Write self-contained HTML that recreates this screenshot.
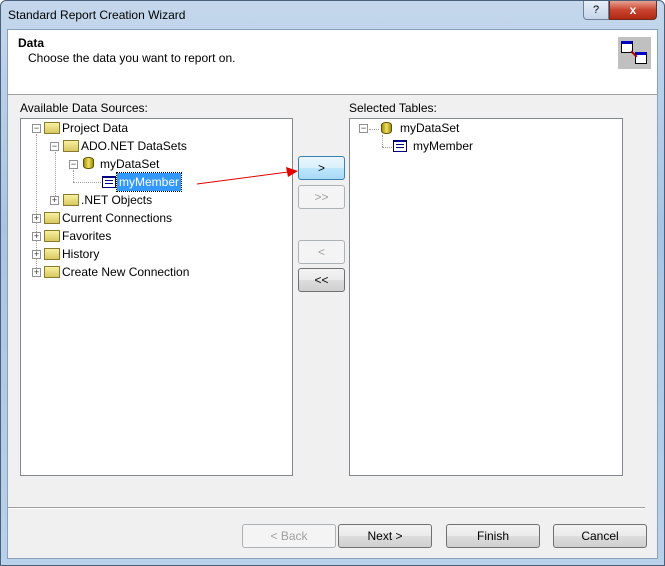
<!DOCTYPE html><html><head><style>
*{margin:0;padding:0;box-sizing:border-box}
body{width:665px;height:566px;overflow:hidden;font-family:"Liberation Sans",sans-serif;font-size:12px;color:#000;background:#fff}
.win{position:absolute;left:0;top:0;width:665px;height:566px;background:linear-gradient(#c4d7ec,#a9c4e3 40%,#b9d1ea);border:1px solid #4a5f78;border-radius:6px 6px 0 0}
.a{position:absolute}
.client{left:6px;top:28px;width:651px;height:530px;background:#f0f0f0;border:1px solid #8aa0ba}
.hdr{left:0;top:0;width:649px;height:65px;background:#fff;border-bottom:1px solid #a0a0a0}
.lb{background:#fff;border:1px solid #828790}
.btn{position:absolute;border:1px solid #707070;border-radius:3px;background:linear-gradient(#f2f2f2 0,#ebebeb 50%,#dddddd 51%,#cfcfcf);text-align:center;font-size:12px;line-height:22px}
.dis{border-color:#adb2b5;background:#f4f4f4;color:#a0a0a0}
.r{position:absolute;height:18px;line-height:18px;white-space:nowrap}
.bx{position:absolute;width:9px;height:9px;border:1px solid #919191;background:#fff;font-size:9px;line-height:7px;text-align:center;color:#333}
.fd{position:absolute;width:16px;height:12px;background:linear-gradient(#f8f0a0,#d8c860);border:1px solid #8a7a30}
.dot{position:absolute;border-left:1px dotted #a0a0a0}
.doth{position:absolute;border-top:1px dotted #a0a0a0}
</style></head><body>
<div class="win">
<div class="a" style="left:7px;top:7px;font-size:12px">Standard Report Creation Wizard</div>
<div class="a" style="left:582px;top:0;width:26px;height:19px;border:1px solid #6d7f96;border-top:none;border-radius:0 0 0 4px;background:linear-gradient(#e6eef8,#c5d5ea);text-align:center;font-size:11px;line-height:18px">?</div>
<div class="a" style="left:608px;top:0;width:48px;height:19px;border:1px solid #6d2a20;border-top:none;border-radius:0 0 4px 0;background:linear-gradient(#e8a090,#c84430 50%,#b02810);color:#fff;text-align:center;font-weight:bold;font-size:12px;line-height:18px">x</div>
<div class="a client">
<div class="a hdr">
<div class="a" style="left:10px;top:6px;font-weight:bold">Data</div>
<div class="a" style="left:20px;top:21px">Choose the data you want to report on.</div>
<div class="a" style="left:610px;top:7px;width:33px;height:32px;background:#c0c0c0">
<div class="a" style="left:3px;top:4px;width:12px;height:12px;background:#fff;border:1px solid #000;border-top:3px solid #0000c0"></div>
<div class="a" style="left:17px;top:15px;width:12px;height:12px;background:#fff;border:1px solid #000;border-top:3px solid #0000c0"></div>
<div class="a" style="left:12px;top:16px;width:8px;height:2px;background:#a00;transform:rotate(45deg)"></div>
</div></div>
<div class="a" style="left:12px;top:71px">Available Data Sources:</div>
<div class="a" style="left:341px;top:71px">Selected Tables:</div>
<div class="a lb" style="left:12px;top:88px;width:273px;height:358px"></div>
<div class="a lb" style="left:341px;top:88px;width:274px;height:358px"></div>
<div class="btn" style="left:290px;top:126px;width:47px;height:24px;border-color:#3c7fb1;background:linear-gradient(#eaf6fd,#d9f0fc 50%,#bee6fd 51%,#a7d9f5)">&gt;</div>
<div class="btn dis" style="left:290px;top:155px;width:47px;height:24px">&gt;&gt;</div>
<div class="btn dis" style="left:290px;top:210px;width:47px;height:24px">&lt;</div>
<div class="btn" style="left:290px;top:238px;width:47px;height:24px">&lt;&lt;</div>
<div class="a" style="left:0;top:477px;width:637px;border-top:1px solid #a0a0a0;border-bottom:1px solid #fff"></div>
<div class="btn dis" style="left:234px;top:494px;width:94px;height:24px">&lt; Back</div>
<div class="btn" style="left:330px;top:494px;width:94px;height:24px">Next &gt;</div>
<div class="btn" style="left:438px;top:494px;width:94px;height:24px">Finish</div>
<div class="btn" style="left:545px;top:494px;width:94px;height:24px">Cancel</div>
</div>
<div class="a" style="left:-1px;top:-1px">
<div class="dot" style="left:36px;top:134px;height:140px"></div>
<div class="dot" style="left:55px;top:152px;height:50px"></div>
<div class="dot" style="left:73px;top:170px;height:12px"></div>
<div class="doth" style="left:73px;top:182px;width:28px"></div>
<div class="bx" style="left:32px;top:124px">−</div><div class="fd" style="left:44px;top:122px"></div><div class="r" style="left:62px;top:119px">Project Data</div>
<div class="bx" style="left:50px;top:142px">−</div><div class="fd" style="left:63px;top:140px"></div><div class="r" style="left:81px;top:137px">ADO.NET DataSets</div>
<div class="bx" style="left:69px;top:160px">−</div><div class="a" style="left:83px;top:157px;width:11px;height:12px;border-radius:5px/3px;background:linear-gradient(90deg,#a09010,#f0e060,#a09010);border:1px solid #605000"></div><div class="r" style="left:100px;top:155px">myDataSet</div>
<div class="a" style="left:102px;top:176px;width:14px;height:12px;border:1px solid #000080;background:#fff;border-top:2px solid #000080"><div class="a" style="left:2px;top:2px;width:8px;height:4px;border-top:1px solid #000080;border-bottom:1px solid #000080"></div></div>
<div class="r" style="left:117px;top:173px;background:#3399ff;color:#fff;padding:0 2px;outline:1px dotted #000">myMember</div>
<div class="bx" style="left:50px;top:196px">+</div><div class="fd" style="left:63px;top:194px"></div><div class="r" style="left:81px;top:191px">.NET Objects</div>
<div class="bx" style="left:32px;top:214px">+</div><div class="fd" style="left:44px;top:212px"></div><div class="r" style="left:62px;top:209px">Current Connections</div>
<div class="bx" style="left:32px;top:232px">+</div><div class="fd" style="left:44px;top:230px"></div><div class="r" style="left:62px;top:227px">Favorites</div>
<div class="bx" style="left:32px;top:250px">+</div><div class="fd" style="left:44px;top:248px"></div><div class="r" style="left:62px;top:245px">History</div>
<div class="bx" style="left:32px;top:268px">+</div><div class="fd" style="left:44px;top:266px"></div><div class="r" style="left:62px;top:263px">Create New Connection</div>
<div class="bx" style="left:359px;top:124px">−</div><div class="doth" style="left:369px;top:129px;width:10px"></div>
<div class="a" style="left:381px;top:122px;width:11px;height:12px;border-radius:5px/3px;background:linear-gradient(90deg,#a09010,#f0e060,#a09010);border:1px solid #605000"></div>
<div class="r" style="left:400px;top:119px">myDataSet</div>
<div class="dot" style="left:382px;top:135px;height:12px"></div><div class="doth" style="left:382px;top:147px;width:10px"></div>
<div class="a" style="left:393px;top:140px;width:14px;height:12px;border:1px solid #000080;background:#fff;border-top:2px solid #000080"><div class="a" style="left:2px;top:2px;width:8px;height:4px;border-top:1px solid #000080;border-bottom:1px solid #000080"></div></div>
<div class="r" style="left:413px;top:137px">myMember</div>
</div>
<svg class="a" style="left:-1px;top:-1px" width="665" height="566"><line x1="197" y1="184" x2="288" y2="172" stroke="#e00000" stroke-width="1"/><polygon points="298,171 286,167 288,177" fill="#e00000"/></svg>
</div>
</body></html>
